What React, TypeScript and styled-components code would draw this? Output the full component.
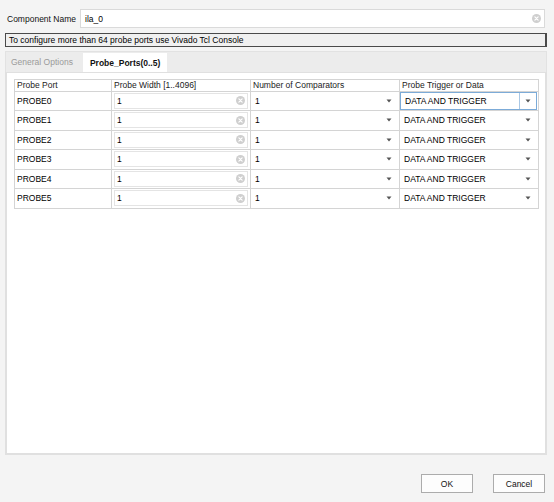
import React from 'react';
import styled, { createGlobalStyle } from 'styled-components';

const GlobalStyle = createGlobalStyle`
  html, body {
    margin: 0;
    padding: 0;
    background: #f4f4f4;
  }
  body {
    font-family: "Liberation Sans", Arial, sans-serif;
    font-size: 8.5px;
    color: #000;
  }
`;

type Probe = { name: string; width: string; comparators: string; trigger: string };

const probes: Probe[] = [0, 1, 2, 3, 4, 5].map((i) => ({
  name: `PROBE${i}`,
  width: '1',
  comparators: '1',
  trigger: 'DATA AND TRIGGER',
}));

const ClearIcon: React.FC = () => (
  <svg width="9" height="9" viewBox="0 0 10 10">
    <circle cx="5" cy="5" r="5" fill="#cfcfcf" />
    <path d="M3.2 3.2 L6.8 6.8 M6.8 3.2 L3.2 6.8" stroke="#fff" strokeWidth="1.3" strokeLinecap="round" />
  </svg>
);

const Caret: React.FC = () => (
  <svg width="6" height="4" viewBox="0 0 6 4">
    <path d="M0.5 0.5 L5.5 0.5 L3 3.5 Z" fill="#555" />
  </svg>
);

const App: React.FC = () => {
  return (
    <>
      <GlobalStyle />
      <StyledDialog>
        <StyledNameRow>
          <StyledNameLabel>Component Name</StyledNameLabel>
          <StyledNameInput>
            <span>ila_0</span>
            <ClearIcon />
          </StyledNameInput>
        </StyledNameRow>
        <StyledInfo>To configure more than 64 probe ports use Vivado Tcl Console</StyledInfo>
        <StyledTabs>
          <StyledTab>General Options</StyledTab>
          <StyledTab active={true}>Probe_Ports(0..5)</StyledTab>
        </StyledTabs>
        <StyledPanel>
          <StyledTable>
            <StyledHeadCell>Probe Port</StyledHeadCell>
            <StyledHeadCell>Probe Width [1..4096]</StyledHeadCell>
            <StyledHeadCell>Number of Comparators</StyledHeadCell>
            <StyledHeadCell>Probe Trigger or Data</StyledHeadCell>
            {probes.map((p, idx) => (
              <React.Fragment key={p.name}>
                <StyledCell>{p.name}</StyledCell>
                <StyledCell>
                  <StyledWidthInput>
                    <span>{p.width}</span>
                    <ClearIcon />
                  </StyledWidthInput>
                </StyledCell>
                <StyledCell>
                  <StyledCombo>
                    <span>{p.comparators}</span>
                    <StyledArrow>
                      <Caret />
                    </StyledArrow>
                  </StyledCombo>
                </StyledCell>
                <StyledCell>
                  <StyledCombo focused={idx === 0}>
                    <span>{p.trigger}</span>
                    <StyledArrow divided={idx === 0}>
                      <Caret />
                    </StyledArrow>
                  </StyledCombo>
                </StyledCell>
              </React.Fragment>
            ))}
          </StyledTable>
        </StyledPanel>
        <StyledFooter>
          <Button>OK</Button>
          <Button>Cancel</Button>
        </StyledFooter>
      </StyledDialog>
    </>
  );
};

const StyledDialog = styled.div`
  width: 554px;
  height: 502px;
  box-sizing: border-box;
  padding: 9px 7px 0 5px;
  display: flex;
  flex-direction: column;
  background: #f4f4f4;
`;

const StyledNameRow = styled.div`
  display: flex;
  align-items: center;
  height: 19px;
`;

const StyledNameLabel = styled.div`
  width: 75px;
  padding-left: 2px;
  box-sizing: border-box;
  white-space: nowrap;
  color: #111;
`;

const StyledNameInput = styled.div`
  flex: 1;
  height: 19px;
  box-sizing: border-box;
  margin-right: 2px;
  background: #fff;
  border: 1px solid #dadada;
  display: flex;
  align-items: center;
  justify-content: space-between;
  padding: 0 3px 0 4px;
`;

const StyledInfo = styled.div`
  margin-top: 5px;
  height: 14px;
  box-sizing: border-box;
  border: 1px solid #4a4a4a;
  border-right-width: 2px;
  background: #f0f0f0;
  padding: 0 3px;
  display: flex;
  align-items: center;
  white-space: nowrap;
`;

const StyledTabs = styled.div`
  margin-top: 4px;
  height: 21px;
  display: flex;
  align-items: flex-end;
  background: #ececec;
  border: 1px solid #e2e2e2;
  border-bottom: none;
  box-sizing: border-box;
`;

const StyledTab = styled.div<{ active?: boolean }>`
  height: ${({ active }) => (active ? '19px' : '20px')};
  display: flex;
  align-items: center;
  padding: ${({ active }) => (active ? '0 7px 0 7px' : '0 9px 0 5px')};
  margin-left: ${({ active }) => (active ? '1px' : '0')};
  background: ${({ active }) => (active ? '#ffffff' : 'transparent')};
  color: ${({ active }) => (active ? '#111' : '#9a9a9a')};
  font-weight: ${({ active }) => (active ? 700 : 400)};
  white-space: nowrap;
`;

const StyledPanel = styled.div`
  flex: 1;
  background: #fff;
  border: 2px solid #e0e0e0;
  border-top: 1px solid #e0e0e0;
  padding: 6px 7px 0 7px;
  box-sizing: border-box;
`;

const StyledTable = styled.div`
  display: grid;
  grid-template-columns: 97px 139px 149px 139px;
  grid-template-rows: 11.5px repeat(6, 19.5px);
  border-top: 1px solid #d4d4d4;
  border-left: 1px solid #d4d4d4;
  width: max-content;
`;

const StyledHeadCell = styled.div`
  border-right: 1px solid #d4d4d4;
  border-bottom: 1px solid #d4d4d4;
  padding: 0 2px;
  display: flex;
  align-items: center;
  color: #222;
  white-space: nowrap;
  overflow: hidden;
`;

const StyledCell = styled.div`
  border-right: 1px solid #d4d4d4;
  border-bottom: 1px solid #d4d4d4;
  padding: 0 2px;
  display: flex;
  align-items: center;
  white-space: nowrap;
  position: relative;
  min-width: 0;
`;

const StyledWidthInput = styled.div`
  flex: 1;
  height: 16px;
  margin: 0 0 0 0;
  box-sizing: border-box;
  background: #fff;
  border: 1px solid #e4e4e4;
  display: flex;
  align-items: center;
  justify-content: space-between;
  padding: 0 2px 0 2px;
`;

const StyledCombo = styled.div<{ focused?: boolean }>`
  flex: 1;
  align-self: stretch;
  margin: ${({ focused }) => (focused ? '0 -1px 0 -2px' : '0 1px 0 2px')};
  padding-left: ${({ focused }) => (focused ? '4px' : '0')};
  border: ${({ focused }) => (focused ? '1px solid #7cabd8' : 'none')};
  display: flex;
  align-items: center;
  justify-content: space-between;
  box-sizing: border-box;
`;

const StyledArrow = styled.div<{ divided?: boolean }>`
  align-self: stretch;
  width: ${({ divided }) => (divided ? '17px' : '14px')};
  display: flex;
  align-items: center;
  justify-content: center;
  border-left: ${({ divided }) => (divided ? '1px solid #a9c8e6' : 'none')};
  box-sizing: border-box;
`;

const StyledFooter = styled.div`
  height: 47px;
  display: flex;
  justify-content: flex-end;
  align-items: flex-start;
  padding-top: 19px;
  gap: 18px;
  box-sizing: border-box;
`;

const Button = styled.button`
  width: 52px;
  height: 19px;
  box-sizing: border-box;
  background: #fdfdfd;
  border: 1px solid #acacac;
  border-radius: 0;
  font-family: "Liberation Sans", Arial, sans-serif;
  font-size: 8.5px;
  color: #111;
  padding: 0;
  margin-right: 2px;
`;

export default App;
